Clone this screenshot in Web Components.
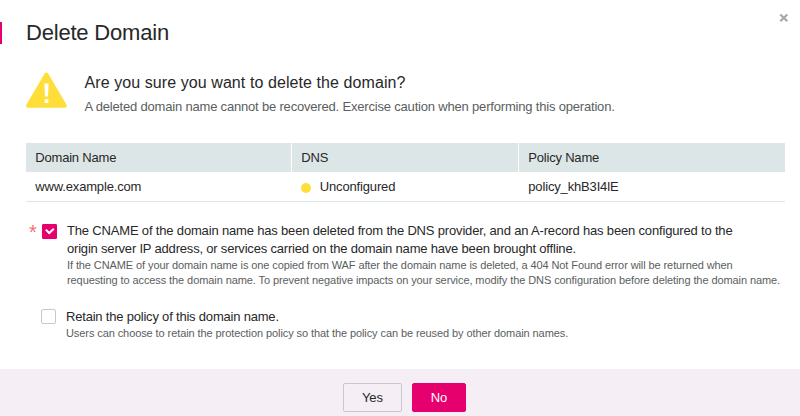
<!DOCTYPE html>
<html lang="en">
<head>
<meta charset="utf-8">
<title>Delete Domain</title>
<style>
html,body{margin:0;height:100%;background:#fff;overflow:hidden}
body{font-family:"Liberation Sans",Arial,sans-serif;color:#282828;font-size:13px}
</style>
</head>
<body>
<delete-dialog></delete-dialog>
<script>
const define = (name, html) => customElements.define(name, class extends HTMLElement {
  constructor() {
    super();
    this.attachShadow({ mode: 'open' }).innerHTML = html;
  }
});

define('text-line', `<style>:host{display:block;white-space:nowrap}</style><slot></slot>`);

define('dialog-header', `<style>
:host{display:flex;justify-content:space-between;height:44px;align-items:flex-end}
.title{display:flex;align-items:center;height:22px;border-left:2px solid #e6006e;padding-left:24px;font-size:22px;letter-spacing:-.2px;white-space:nowrap;line-height:22px}
svg{align-self:flex-start;margin:13px 11px 0 0}
</style><div class="title"><slot></slot></div>
<svg width="10" height="10" viewBox="0 0 10 10"><path d="M1.3 1.5 8.3 8.3M8.3 1.5 1.3 8.3" stroke="#a9a9a9" stroke-width="2.3" fill="none"/></svg>`);

define('warning-message', `<style>
:host{display:flex;padding:27px 0 0 25px;height:56px}
.text{padding:2px 0 0 16.5px}
::slotted([slot=heading]){font-size:16px;line-height:20px;letter-spacing:.08px}
::slotted([slot=detail]){font-size:13px;line-height:18px;letter-spacing:-.186px;color:#5a5e5e;margin-top:5px}
</style>
<svg width="43" height="38" viewBox="0 0 43 38"><path d="M21.4 3.5 39.8 34.8H3Z" fill="#ffde3a" stroke="#ffde3a" stroke-width="4" stroke-linejoin="round"/><path d="M19.3 12.5h4.4l-.7 13h-3zM19.6 28.3h3.7v3.8h-3.7z" fill="#fff"/></svg>
<div class="text"><slot name="heading"></slot><slot name="detail"></slot></div>`);

define('status-dot', `<style>:host{display:flex;align-items:center;gap:8.5px}i{width:10px;height:10px;border-radius:50%;background:#ffde3a;margin-top:2px}</style><i></i><slot></slot>`);

define('domain-table', `<style>
:host{display:block;margin:16px 15px 0 26px;letter-spacing:-.16px}
.row{display:grid;grid-template-columns:265px 226px 266px;column-gap:1px}
.row>*{height:29px;line-height:29px;padding-left:9.3px;white-space:nowrap}
.head{letter-spacing:-.2px}
.head>*{background:#dde6e6}
.data{border-bottom:1px solid #dde6e6}
</style>
<div class="row head"><div>Domain Name</div><div>DNS</div><div>Policy Name</div></div>
<div class="row data"><div>www.example.com</div><status-dot>Unconfigured</status-dot><div>policy_khB3I4lE</div></div>`);

define('check-option', `<style>
:host{display:flex;padding-left:26px}
.mark{width:16px;color:#f66f6a;font-size:20px;line-height:20px;padding-left:3px;box-sizing:border-box}
.box{box-sizing:border-box;width:15px;height:15px;margin:2px 10px 0 0;border:1px solid #c8c8c8;border-radius:2px;flex:none}
svg{display:none}
:host(:not([required])) .mark{visibility:hidden;width:15px}
:host(:not([required])) .box{margin-top:1px}
:host([checked]) .box{background:#e6006e;border-color:#e6006e;border-radius:1px}
:host([checked]) svg{display:block}
::slotted([slot=label]){font-size:13px;line-height:18px;letter-spacing:var(--track,-.18px)}
::slotted([slot=note]){font-size:11px;line-height:15px;letter-spacing:var(--track,-.087px);color:#5a5e5e}
</style>
<span class="mark">*</span>
<span class="box"><svg width="13" height="13" viewBox="0 0 13 13"><path d="M2.8 4.6 6.2 8 10.8 3.8" stroke="#fff" stroke-width="2" fill="none"/></svg></span>
<div><slot name="label"></slot><slot name="note"></slot></div>`);

define('action-button', `<style>
:host{display:flex;box-sizing:border-box;width:59px;height:29px;align-items:center;justify-content:center;border:1px solid #c5c8cc;border-radius:2px;background:#f5eef5;font-size:13px;cursor:pointer}
:host([primary]){width:54px;background:#e6006e;border-color:#e6006e;color:#fff}
</style><slot></slot>`);

define('dialog-footer', `<style>
:host{display:flex;gap:10px;justify-content:center;box-sizing:border-box;padding:14px 0 0 9px;height:47px;background:#f5eef5;margin-top:auto}
</style><slot></slot>`);

define('delete-dialog', `<style>
:host{display:flex;flex-direction:column;height:416px}
.first{margin-top:20px}
.second{margin-top:20px}
</style>
<dialog-header>Delete Domain</dialog-header>
<warning-message>
<text-line slot="heading">Are you sure you want to delete the domain?</text-line>
<text-line slot="detail">A deleted domain name cannot be recovered. Exercise caution when performing this operation.</text-line>
</warning-message>
<domain-table></domain-table>
<check-option class="first" checked required>
<text-line slot="label" style="--track:-.17px">The CNAME of the domain name has been deleted from the DNS provider, and an A-record has been configured to the</text-line>
<text-line slot="label" style="--track:-.192px">origin server IP address, or services carried on the domain name have been brought offline.</text-line>
<text-line slot="note" style="--track:-.095px">If the CNAME of your domain name is one copied from WAF after the domain name is deleted, a 404 Not Found error will be returned when</text-line>
<text-line slot="note">requesting to access the domain name. To prevent negative impacts on your service, modify the DNS configuration before deleting the domain name.</text-line>
</check-option>
<check-option class="second">
<text-line slot="label" style="--track:-.2px">Retain the policy of this domain name.</text-line>
<text-line slot="note">Users can choose to retain the protection policy so that the policy can be reused by other domain names.</text-line>
</check-option>
<dialog-footer><action-button>Yes</action-button><action-button primary>No</action-button></dialog-footer>`);
</script>
</body>
</html>
